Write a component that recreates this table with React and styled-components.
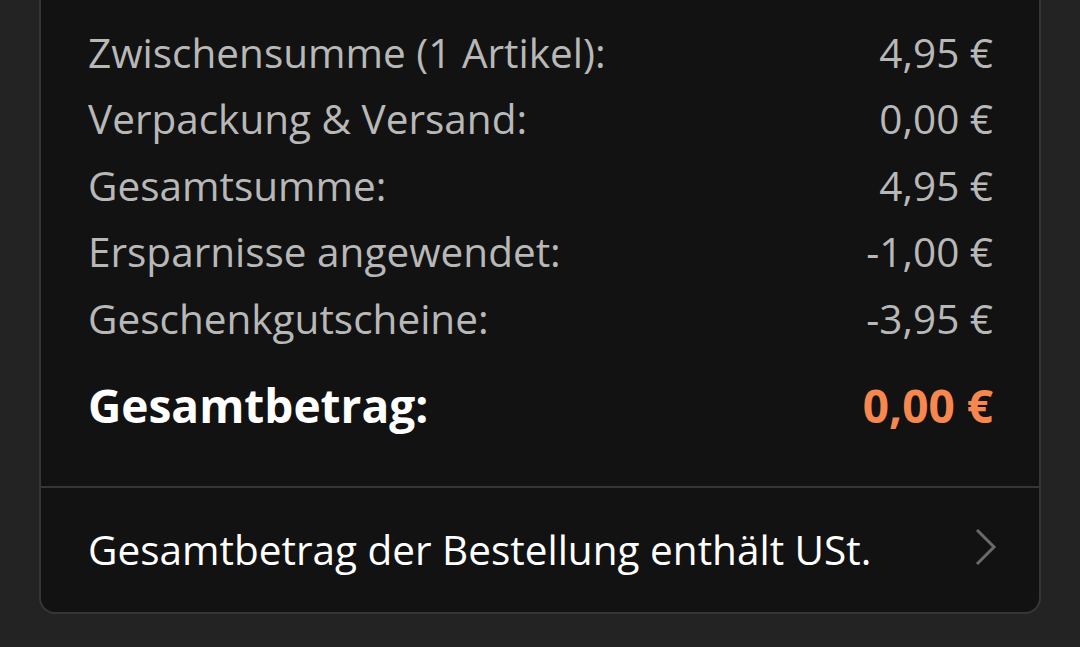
import styled, { createGlobalStyle } from "styled-components";

const GlobalStyle = createGlobalStyle`
  html, body {
    margin: 0;
    padding: 0;
    background: #232323;
  }
  body {
    font-family: "Open Sans", "Noto Sans", sans-serif;
    overflow: hidden;
  }
`;

const rows = [
  { label: "Zwischensumme (1 Artikel):", value: "4,95 €" },
  { label: "Verpackung & Versand:", value: "0,00 €" },
  { label: "Gesamtsumme:", value: "4,95 €" },
  { label: "Ersparnisse angewendet:", value: "-1,00 €" },
  { label: "Geschenkgutscheine:", value: "-3,95 €" },
];

export default function App() {
  return (
    <Page>
      <GlobalStyle />
      <Card>
        <Summary>
          {rows.map((row) => (
            <Row key={row.label}>
              <span>{row.label}</span>
              <span>{row.value}</span>
            </Row>
          ))}
          <TotalRow>
            <span>Gesamtbetrag:</span>
            <TotalValue>0,00 €</TotalValue>
          </TotalRow>
        </Summary>
        <TaxRow>
          <span>Gesamtbetrag der Bestellung enthält USt.</span>
          <Chevron width="24" height="40" viewBox="0 0 24 40">
            <path d="M3 3 L20 20 L3 37" fill="none" stroke="#6a6a6a" strokeWidth="3" />
          </Chevron>
        </TaxRow>
      </Card>
    </Page>
  );
}

const Page = styled.div`
  width: 1080px;
  height: 647px;
  padding: 0 39px;
  box-sizing: border-box;
`;

const Card = styled.div`
  background: #121212;
  border: 2px solid #363636;
  border-top: none;
  border-radius: 0 0 16px 16px;
`;

const Summary = styled.div`
  padding: 19px 46px 0 47px;
  border-bottom: 2px solid #363636;
`;

const Row = styled.div`
  display: flex;
  justify-content: space-between;
  align-items: center;
  height: 66.5px;
  font-size: 40.5px;
  color: #b8b8b8;
`;

const TotalRow = styled(Row)`
  height: 66px;
  padding: 20px 0 48px;
  font-size: 46px;
  font-weight: 700;
  color: #ffffff;
`;

const TotalValue = styled.span`
  color: #f5874f;
`;

const TaxRow = styled.div`
  display: flex;
  justify-content: space-between;
  align-items: center;
  height: 124px;
  padding: 0 41px 0 47px;
  font-size: 40.5px;
  color: #ffffff;
`;

const Chevron = styled.svg`
  display: block;
  margin-top: -6px;
`;
